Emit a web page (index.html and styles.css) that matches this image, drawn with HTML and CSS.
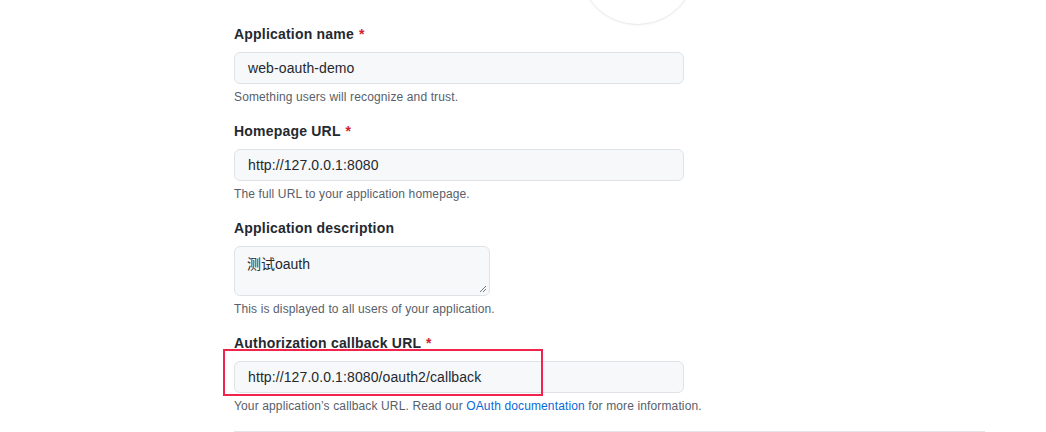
FILE: index.html
```html
<!DOCTYPE html>
<html lang="en">
<head>
<meta charset="utf-8">
<title>Register OAuth application</title>
<link rel="stylesheet" href="styles.css">
</head>
<body>
<main class="page">
  <div class="logo-circle"></div>
  <form class="form">
    <div class="group">
      <div class="label">Application name <span class="req">*</span></div>
      <div class="field">web-oauth-demo</div>
      <p class="note">Something users will recognize and trust.</p>
    </div>
    <div class="group">
      <div class="label">Homepage URL <span class="req">*</span></div>
      <div class="field">http://127.0.0.1:8080</div>
      <p class="note">The full URL to your application homepage.</p>
    </div>
    <div class="group">
      <div class="label">Application description</div>
      <div class="field area">测试oauth
        <svg class="grip" width="8" height="8" viewBox="0 0 8 8"><path d="M7 1 L1 7 M7 4 L4 7" stroke="#6e7781" stroke-width="1" fill="none"/></svg>
      </div>
      <p class="note">This is displayed to all users of your application.</p>
    </div>
    <div class="group">
      <div class="label">Authorization callback URL <span class="req">*</span></div>
      <div class="field-wrap">
        <div class="field">http://127.0.0.1:8080/oauth2/callback</div>
        <div class="highlight"></div>
      </div>
      <p class="note">Your application’s callback URL. Read our <a href="#" class="link">OAuth documentation</a> for more information.</p>
    </div>
    <div class="divider"></div>
  </form>
</main>
</body>
</html>
```
FILE: styles.css
```css
html, body {
  margin: 0;
  padding: 0;
  background: #ffffff;
}
body {
  font-family: "Liberation Sans", Arial, "Noto Sans CJK SC", sans-serif;
  color: #24292f;
  width: 1046px;
  height: 432px;
  overflow: hidden;
}
.page {
  position: relative;
  padding-left: 234px;
  padding-top: 24px;
}
.logo-circle {
  position: absolute;
  left: 580px;
  top: -91px;
  width: 115px;
  height: 115px;
  border-radius: 50%;
  background: #ffffff;
  box-shadow: 0 1px 3px rgba(0, 0, 0, 0.07), 0 0 0 1px rgba(0, 0, 0, 0.035);
}
.form {
  width: 751px;
  display: flex;
  flex-direction: column;
  gap: 15px;
}
.group {
  display: flex;
  flex-direction: column;
}
.label {
  font-size: 14px;
  font-weight: 700;
  line-height: 21px;
  margin-bottom: 7px;
  color: #24292f;
  letter-spacing: 0.2px;
}
.req {
  color: #cf222e;
  margin-left: 1px;
}
.field {
  box-sizing: border-box;
  width: 450px;
  height: 32px;
  padding: 0 12px 0 13px;
  border: 1px solid #dfe3e8;
  border-radius: 6px;
  background: #f6f8fa;
  font-size: 14px;
  line-height: 30px;
  color: #24292f;
  white-space: nowrap;
  letter-spacing: 0.1px;
}
.field.area {
  position: relative;
  width: 256px;
  height: 50px;
  line-height: 20px;
  padding-top: 7px;
  padding-left: 12px;
  letter-spacing: 0;
}
.grip {
  position: absolute;
  right: 2px;
  bottom: 2px;
}
.note {
  margin: 4px 0 0;
  font-size: 12px;
  line-height: 18px;
  color: #57606a;
  letter-spacing: 0.13px;
}
.link {
  color: #0969da;
  text-decoration: none;
}
.field-wrap {
  position: relative;
}
.highlight {
  position: absolute;
  left: -11px;
  top: -12px;
  box-sizing: border-box;
  width: 320px;
  height: 47px;
  border: 2px solid #f0244c;
}
.divider {
  height: 0;
  border-top: 1px solid #e1e4e8;
  margin-top: 1px;
}
```
